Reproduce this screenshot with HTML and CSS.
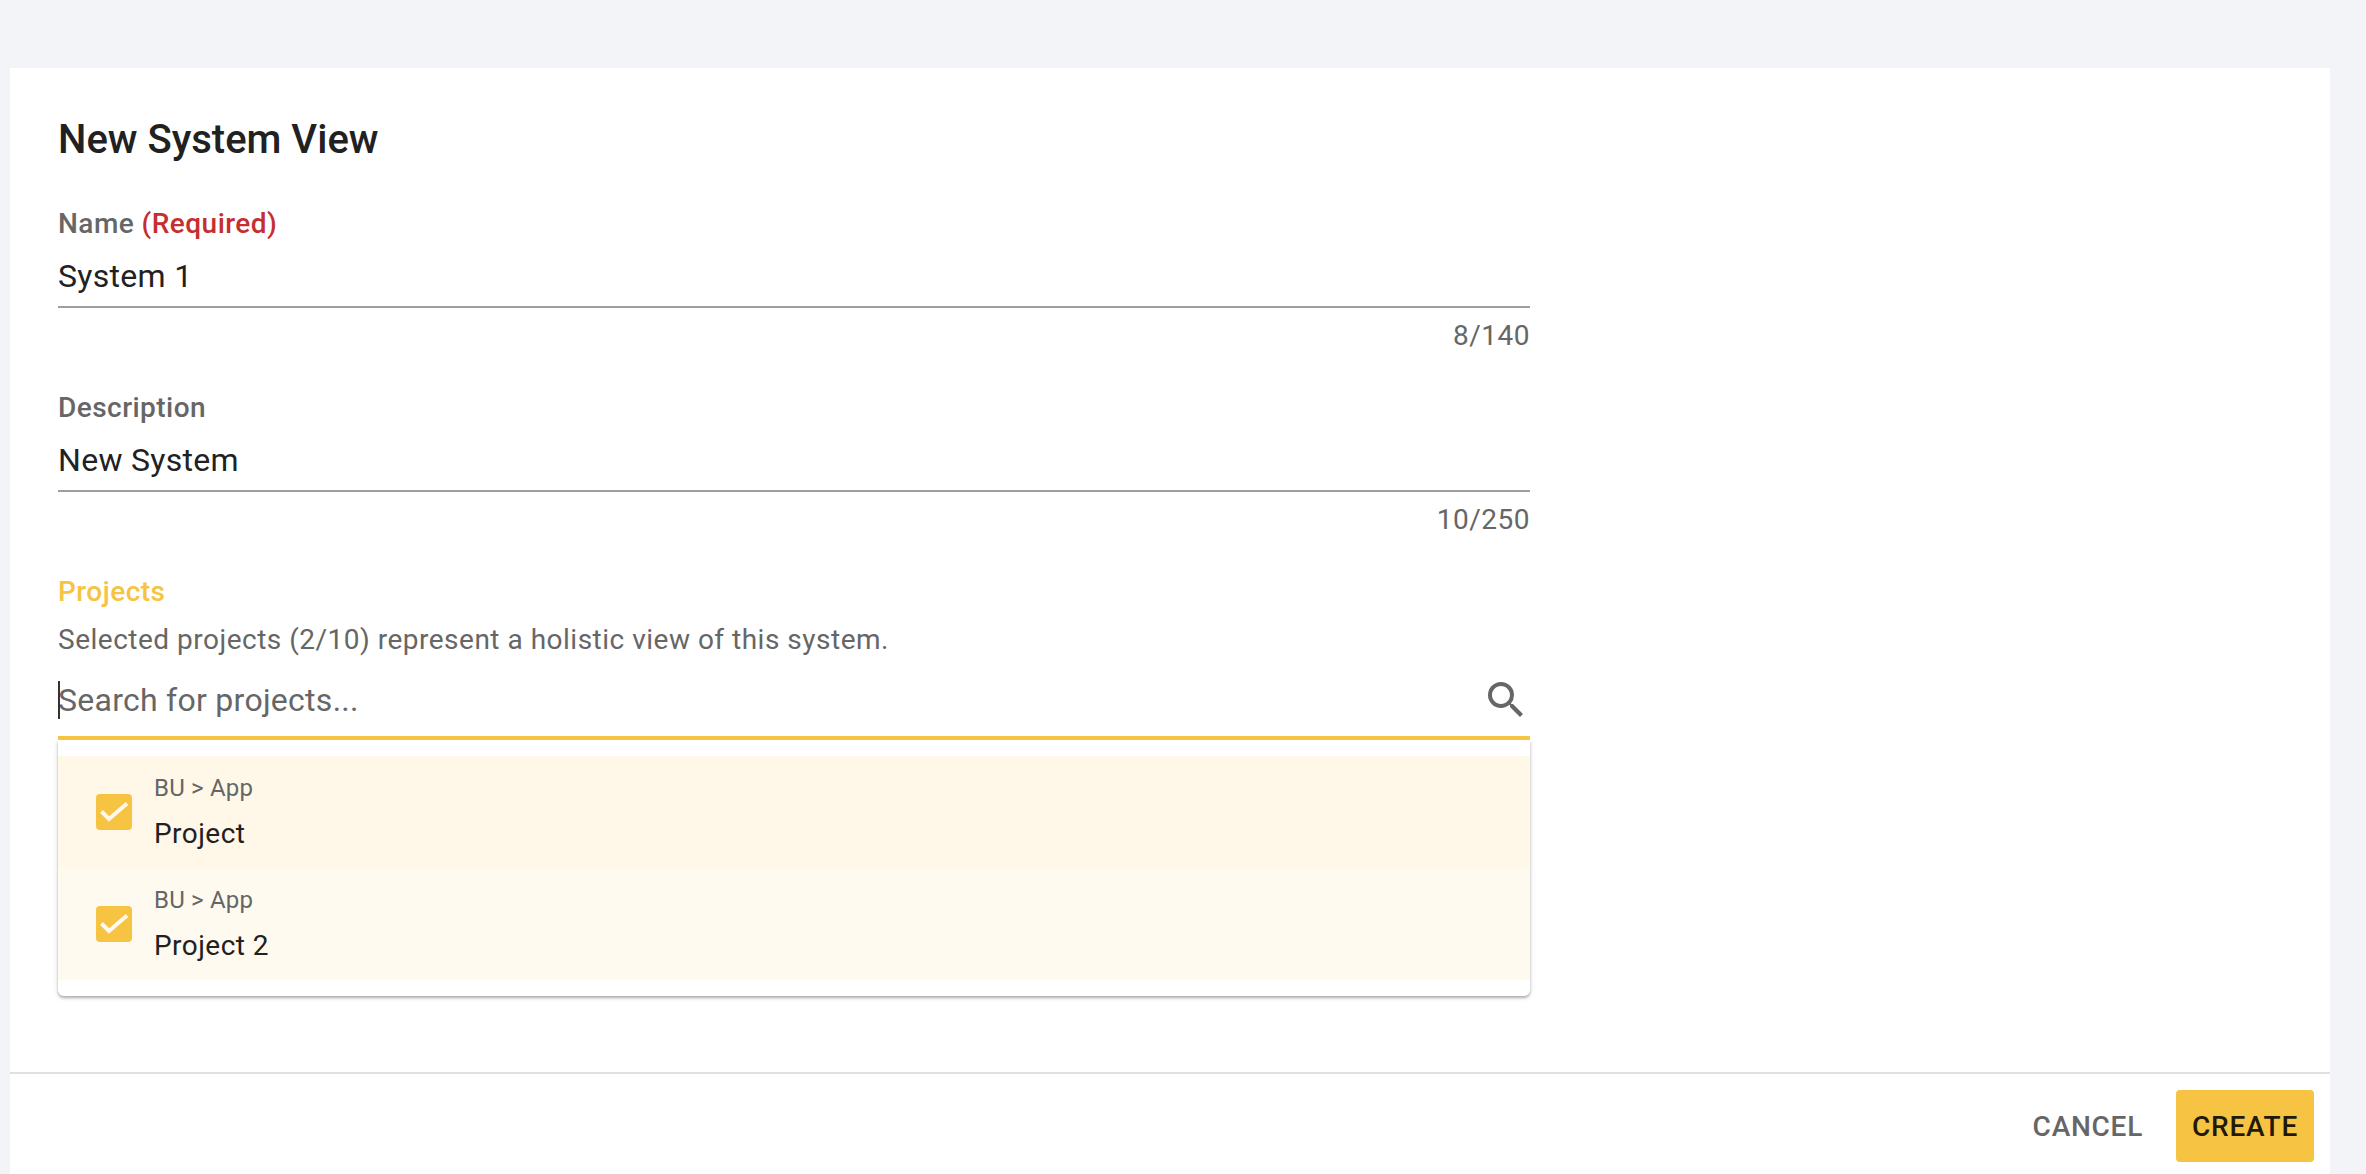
FILE: index.html
```html
<!DOCTYPE html>
<html lang="en">
<head>
<meta charset="utf-8">
<title>New System View</title>
<link rel="stylesheet" href="styles.css">
</head>
<body>
<main class="card">
  <div class="content">
    <h1 class="title">New System View</h1>
    <section class="field">
      <div class="label">Name <span class="required">(Required)</span></div>
      <div class="value">System 1</div>
      <div class="counter">8/140</div>
    </section>
    <section class="field">
      <div class="label">Description</div>
      <div class="value">New System</div>
      <div class="counter">10/250</div>
    </section>
    <section class="projects">
      <div class="label label-active">Projects</div>
      <div class="hint">Selected projects (2/10) represent a holistic view of this system.</div>
      <div class="search">
        <span class="caret"></span>
        <span class="placeholder">Search for projects...</span>
        <svg class="search-icon" viewBox="0 0 24 24" width="48" height="48"><path fill="#666666" d="M15.5 14h-.79l-.28-.27A6.47 6.47 0 0 0 16 9.5 6.5 6.5 0 1 0 9.5 16c1.61 0 3.09-.59 4.23-1.57l.27.28v.79l5 4.99L20.49 19l-4.99-5zm-6 0C7.01 14 5 11.99 5 9.5S7.01 5 9.5 5 14 7.01 14 9.5 11.99 14 9.5 14z"/></svg>
      </div>
      <div class="dropdown">
        <div class="row row-active">
          <span class="check"><svg viewBox="0 0 36 36" width="36" height="36"><path d="M5.5 17.5l7.5 7.5L31 9.5" fill="none" stroke="#fff8e8" stroke-width="4"/></svg></span>
          <div class="row-text">
            <div class="path">BU &gt; App</div>
            <div class="project">Project</div>
          </div>
        </div>
        <div class="row">
          <span class="check"><svg viewBox="0 0 36 36" width="36" height="36"><path d="M5.5 17.5l7.5 7.5L31 9.5" fill="none" stroke="#fffaef" stroke-width="4"/></svg></span>
          <div class="row-text">
            <div class="path">BU &gt; App</div>
            <div class="project">Project 2</div>
          </div>
        </div>
      </div>
    </section>
  </div>
  <footer class="footer">
    <button class="btn btn-text" type="button">CANCEL</button>
    <button class="btn btn-primary" type="button">CREATE</button>
  </footer>
</main>
</body>
</html>
```

FILE: styles.css
```css
* { box-sizing: border-box; }
html, body { height: 100%; }
body {
  margin: 0;
  background: #f3f4f8;
  font-family: Roboto, "Liberation Sans", sans-serif;
  color: #212121;
  overflow: hidden;
}
.card {
  height: 1106px;
  margin: 68px 36px 0 10px;
  background: #fff;
  display: flex;
  flex-direction: column;
}
.content { flex: 1; padding: 48px 0 0 48px; width: 1520px; }
.title {
  margin: 0 0 40px;
  font-size: 40px;
  line-height: 48px;
  font-weight: 500;
  color: #212121;
}
.field { margin-bottom: 32px; }
.label {
  font-size: 28px;
  line-height: 40px;
  font-weight: 500;
  letter-spacing: 0.46px;
  color: #666666;
}
.required { color: #c62f2f; }
.label-active { color: #f6c343; }
.value {
  height: 64px;
  padding-top: 10px;
  font-size: 32px;
  line-height: 44px;
  letter-spacing: 0.3px;
  color: #212121;
  border-bottom: 2px solid #9e9e9e;
}
.counter {
  margin-top: 8px;
  text-align: right;
  font-size: 28px;
  line-height: 40px;
  letter-spacing: 0.5px;
  color: #666666;
}
.hint {
  margin-top: 8px;
  font-size: 28px;
  line-height: 40px;
  letter-spacing: 0.5px;
  color: #666666;
}
.search {
  position: relative;
  height: 80px;
  padding-top: 4px;
  display: flex;
  align-items: center;
  justify-content: space-between;
  border-bottom: 4px solid #f6c343;
}
.caret {
  position: absolute;
  left: 0;
  top: 21px;
  width: 2px;
  height: 38px;
  background: #333333;
}
.placeholder { font-size: 32px; line-height: 44px; letter-spacing: 0.27px; color: #666666; }
.search-icon { display: block; }
.dropdown {
  padding: 16px 0;
  background: #fff;
  border-radius: 0 0 6px 6px;
  box-shadow: 0 2px 3px rgba(0,0,0,.3), 0 1px 8px rgba(0,0,0,.06);
}
.row {
  height: 112px;
  padding-left: 38px;
  display: flex;
  align-items: center;
  gap: 22px;
  background: #fffaef;
}
.row-active { background: #fff8e8; }
.check {
  width: 36px;
  height: 36px;
  flex: none;
  border-radius: 4px;
  background: #f6c343;
}
.check svg { display: block; }
.row-text { padding-top: 1px; }
.path { font-size: 24px; line-height: 32px; letter-spacing: 0.2px; color: #666666; }
.project { margin-top: 10px; font-size: 28px; line-height: 40px; letter-spacing: 0.45px; color: #212121; }
.footer {
  height: 102px;
  padding: 16px 16px 12px;
  border-top: 2px solid #e0e0e4;
  display: flex;
  justify-content: flex-end;
  align-items: flex-start;
  gap: 13px;
}
.btn {
  height: 72px;
  border: 0;
  border-radius: 4px;
  background: transparent;
  font-family: inherit;
  font-size: 28px;
  font-weight: 500;
  letter-spacing: 0.75px;
  padding: 0 16px;
  color: #666666;
}
.btn-text { padding: 0 20px; }
.btn-primary { background: #f6c343; color: #1f1a0a; }
```
